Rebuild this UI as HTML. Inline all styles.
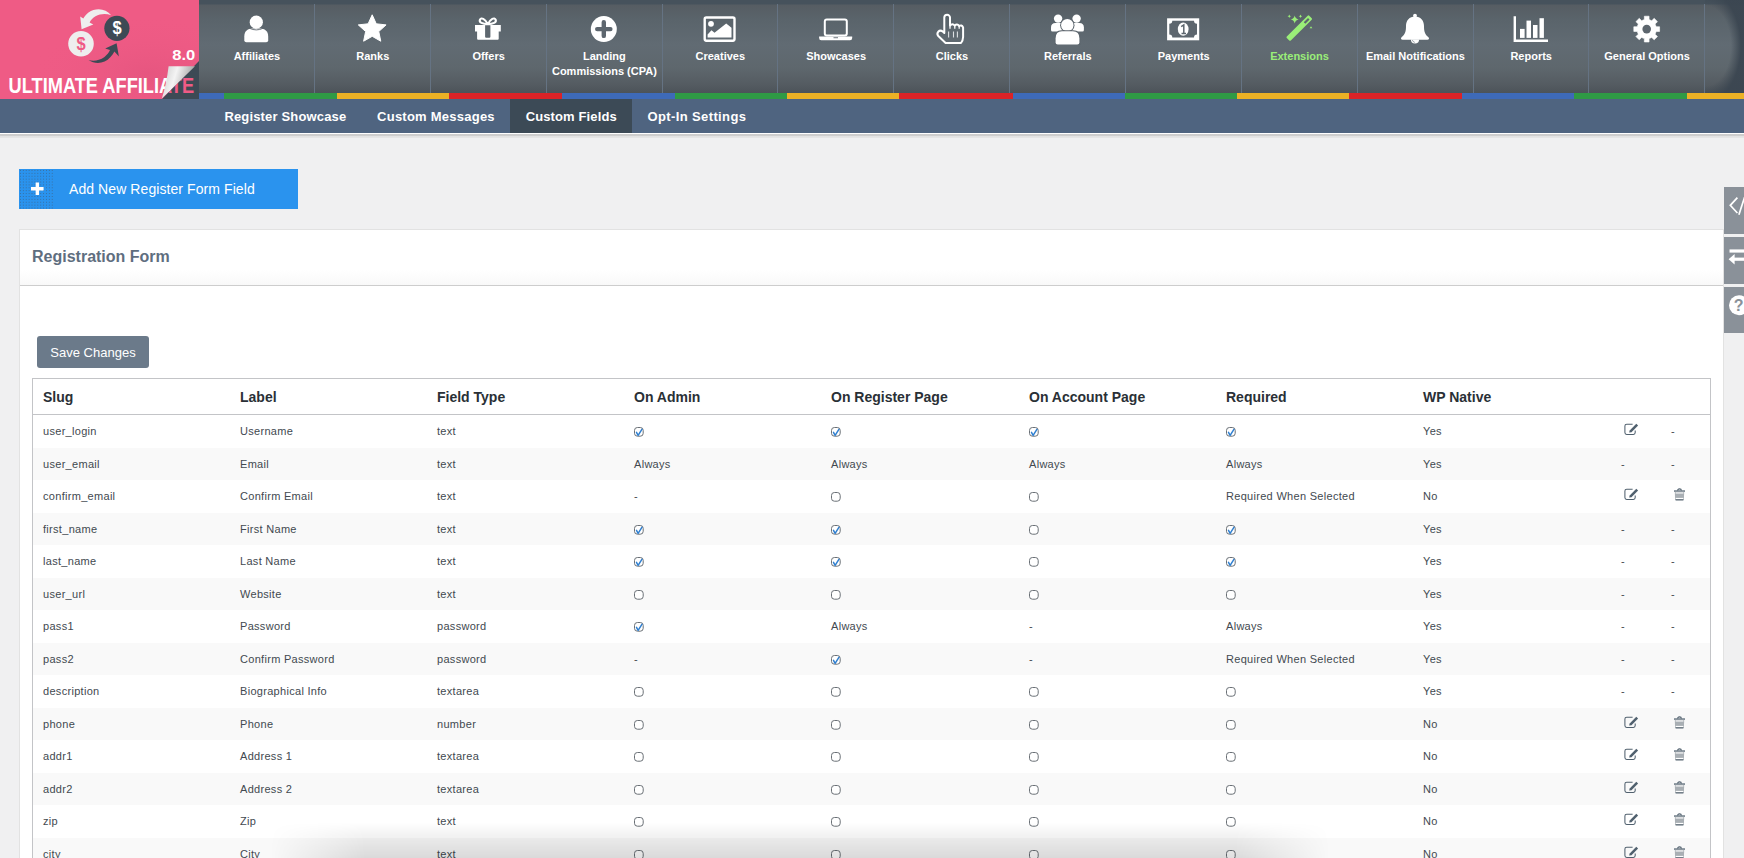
<!DOCTYPE html>
<html><head><meta charset="utf-8">
<style>
*{box-sizing:border-box;margin:0;padding:0}
html,body{width:1744px;height:858px;overflow:hidden;background:#f0f0f1;font-family:"Liberation Sans",sans-serif;position:relative}
.abs{position:absolute}
#topnav{position:absolute;left:0;top:0;width:1744px;height:93px;background:linear-gradient(#46525c 0px,#46525c 4px,#565d63 5px,#5a646b 20px,#616b73 45px,#5e676d 68px,#555c62 84px,#4c5359 93px)}
#logo{position:absolute;left:0;top:0;width:199px;height:99px;background:#ef5b85;overflow:hidden}
.nav{position:absolute;top:0;height:93px;width:115.8px;text-align:center;color:#fff;font-weight:bold;font-size:11px;line-height:15px}
.nav .lbl{position:absolute;left:0;right:0;top:49px}
.sep{position:absolute;top:4px;height:89px;width:1px;background:#657383}
#vign{position:absolute;left:1705px;top:0;width:39px;height:93px;background:radial-gradient(ellipse 36px 56px at 0px 46px,rgba(59,70,81,0) 72%,rgba(59,70,81,.95) 100%)}
#bars{position:absolute;left:199px;top:93px;width:1545px;height:6px;
 background:linear-gradient(90deg,#3e6ab8 0,#3e6ab8 25px,#2f9a45 25px,#2f9a45 138px,#ecb125 138px,#ecb125 250px,#db2327 250px,#db2327 363px,#3e6ab8 363px,#3e6ab8 476px,#2f9a45 476px,#2f9a45 588px,#ecb125 588px,#ecb125 700px,#db2327 700px,#db2327 814px,#3e6ab8 814px,#3e6ab8 926px,#2f9a45 926px,#2f9a45 1038px,#ecb125 1038px,#ecb125 1150px,#db2327 1150px,#db2327 1263px,#3e6ab8 1263px,#3e6ab8 1375px,#2f9a45 1375px,#2f9a45 1488px,#ecb125 1488px)}
#subnav{position:absolute;left:0;top:99px;width:1744px;height:33.6px;background:#4f6480}
.tab{position:absolute;top:0;height:33.6px;padding:0 15px;color:#fff;font-weight:bold;font-size:13px;line-height:34px;white-space:nowrap}
.tab.act{background:#3c4a56}
.tt{position:absolute;top:0;height:33px;color:#fff;font-weight:bold;font-size:13px;line-height:35px;white-space:nowrap}
#sline{position:absolute;left:0;top:132.6px;width:1744px;height:1.6px;background:#fff}
#sshadow{position:absolute;left:0;top:134.2px;width:1744px;height:4.5px;background:linear-gradient(#cdcdcd 0,#cfcfcf 2.2px,#e2e2e2 2.4px,#e6e6e6 4px,#f0f0f1 4.5px)}
#addbtn{position:absolute;left:19px;top:169px;width:279px;height:40px;background:#2a93ee;color:#fff;font-size:14px}
#addbtn .ic{position:absolute;left:0;top:0;width:35px;height:40px;background-color:#2a93ee;background-image:radial-gradient(circle,rgba(70,80,95,.55) 0.7px,transparent 0.9px);background-size:2.9px 2.9px}
#addbtn .t{position:absolute;left:50px;top:0;line-height:40px;letter-spacing:0.08px}
#card{position:absolute;left:19px;top:229px;width:1705px;height:700px;background:#fff;border:1px solid #e2e2e2}
#cardhead{position:absolute;left:0;top:0;width:100%;height:56px;border-bottom:1px solid #cdcdcd;background:linear-gradient(#fff 0,#fff 40px,#f8f8f8 56px)}
#cardhead h3{position:absolute;left:12px;top:18px;font-size:16px;font-weight:bold;color:#5f6e7f}
#save{position:absolute;left:37px;top:336px;width:112px;height:32px;background:#6b7a8a;border-radius:3px;color:#fff;font-size:13px;line-height:33px;text-align:center}
#tbl{position:absolute;left:32px;top:378px;width:1679px;border:1px solid #c3c4c7;border-bottom:none;background:#fff}
.row{position:relative;height:32.5px;font-size:11px;letter-spacing:0.3px;color:#424950}
.ck{position:absolute;left:0;top:10px}
.ed{position:absolute;left:3px;top:8px}
.tr{position:absolute;left:3px;top:8.3px}
.row.alt{background:#f9f9f9}
.hdr{height:36px;border-bottom:1px solid #c3c4c7;font-size:14px;font-weight:bold;color:#2a3036}
.c{position:absolute;top:0;white-space:nowrap}
.row.hdr .c{line-height:37px;letter-spacing:0}
.row .c{line-height:33px}
.cb{display:inline-block;width:10px;height:10px;border:1px solid #8c8f94;border-radius:3px;vertical-align:middle;position:relative;top:-1px;background:#fff}
#tabs{position:absolute;left:1724px;top:187px;width:20px}
.stab{position:absolute;left:0;width:20px;background:#8a9199}
#btmshadow{position:absolute;left:270px;top:822px;width:1060px;height:36px;background:linear-gradient(rgba(0,0,0,0) 0%,rgba(0,0,0,.06) 45%,rgba(0,0,0,.12) 100%);-webkit-mask-image:linear-gradient(90deg,transparent 0,#000 9%,#000 91%,transparent 100%);mask-image:linear-gradient(90deg,transparent 0,#000 9%,#000 91%,transparent 100%)}
</style></head><body>
<div id="topnav"></div>
<div id="logo"><svg class="abs" style="left:0;top:0" width="199" height="99" viewBox="0 0 199 99">
<defs>
<linearGradient id="curl" x1="0" y1="0" x2="1" y2="0.3">
<stop offset="0" stop-color="#c9c9c9"/><stop offset="0.45" stop-color="#f4f4f4"/><stop offset="1" stop-color="#9a9a9a"/>
</linearGradient>
<radialGradient id="pinkg" cx="0.75" cy="0.75" r="0.6">
<stop offset="0" stop-color="#e0527c"/><stop offset="1" stop-color="#ef5b85" stop-opacity="0"/>
</radialGradient>
</defs>
<rect width="199" height="99" fill="#ef5b85"/>
<rect width="199" height="99" fill="url(#pinkg)" opacity="0.6"/>
<!-- white arrow (top) -->
<path d="M111.2,15.2 C106,8.5 96,7.2 88.5,12.5 C86,14.3 84.5,16.5 83.3,18.4 L80.2,16.4 L81.6,29.2 L93.3,24.6 L89.6,22.4 C91,20 92.8,17.8 95.5,16.3 C100.5,13.5 106.5,13.6 111.2,15.2Z" fill="#eeeeee"/>
<!-- dark arrow (bottom) -->
<path d="M88.6,60 C95,64.5 104.5,64 110.5,57 C112,55.3 113.3,53.6 114.4,51.4 L118.9,56.6 L116.6,43.2 L105.2,48.5 L110,50.1 C108.8,52.8 107,55 104.5,57 C99,61 93,61.2 88.6,60Z" fill="#3d4a55"/>
<circle cx="81" cy="43.7" r="12.8" fill="#eeeeee"/>
<circle cx="116.9" cy="28.3" r="12.6" fill="#3d4a55"/>
<text x="0" y="0" transform="translate(81.2,49.6) scale(0.92,1)" text-anchor="middle" font-family="Liberation Sans" font-weight="bold" font-size="18" fill="#ef5b85">$</text>
<text x="0" y="0" transform="translate(117.1,34.4) scale(0.92,1)" text-anchor="middle" font-family="Liberation Sans" font-weight="bold" font-size="18" fill="#ffffff">$</text>
<text x="172.3" y="60" font-family="Liberation Sans" font-weight="bold" font-size="14.4" fill="#ffffff" textLength="23" lengthAdjust="spacingAndGlyphs">8.0</text>
<text x="8.6" y="92.6" font-family="Liberation Sans" font-weight="bold" font-size="21.6" fill="#ffffff" textLength="185.5" lengthAdjust="spacingAndGlyphs">ULTIMATE AFFILIATE</text>
<clipPath id="darktri"><path d="M199,61 L199,99 L162,99Z"/></clipPath>
<path d="M199,61 L199,99 L162,99Z" fill="#3d4a55"/>
<text clip-path="url(#darktri)" x="8.6" y="92.6" font-family="Liberation Sans" font-weight="bold" font-size="21.6" fill="#ef5b85" textLength="185.5" lengthAdjust="spacingAndGlyphs">ULTIMATE AFFILIATE</text>
<path d="M168.6,66.2 L195,66.2 L161.8,98.6 Q166.5,84 168.6,66.2Z" fill="url(#curl)"/>
</svg></div>
<div id="navitems"><div class="nav" style="left:199.0px"><div class="lbl">Affiliates</div></div>
<div class="sep" style="left:314px"></div>
<div class="nav" style="left:314.9px"><div class="lbl">Ranks</div></div>
<div class="sep" style="left:430px"></div>
<div class="nav" style="left:430.7px"><div class="lbl">Offers</div></div>
<div class="sep" style="left:546px"></div>
<div class="nav" style="left:546.5px"><div class="lbl">Landing<br>Commissions (CPA)</div></div>
<div class="sep" style="left:662px"></div>
<div class="nav" style="left:662.4px"><div class="lbl">Creatives</div></div>
<div class="sep" style="left:777px"></div>
<div class="nav" style="left:778.2px"><div class="lbl">Showcases</div></div>
<div class="sep" style="left:893px"></div>
<div class="nav" style="left:894.1px"><div class="lbl">Clicks</div></div>
<div class="sep" style="left:1009px"></div>
<div class="nav" style="left:1009.9px"><div class="lbl">Referrals</div></div>
<div class="sep" style="left:1125px"></div>
<div class="nav" style="left:1125.8px"><div class="lbl">Payments</div></div>
<div class="sep" style="left:1241px"></div>
<div class="nav" style="left:1241.6px"><div class="lbl" style="color:#9aee78">Extensions</div></div>
<div class="sep" style="left:1357px"></div>
<div class="nav" style="left:1357.5px"><div class="lbl">Email Notifications</div></div>
<div class="sep" style="left:1473px"></div>
<div class="nav" style="left:1473.3px"><div class="lbl">Reports</div></div>
<div class="sep" style="left:1588px"></div>
<div class="nav" style="left:1589.2px"><div class="lbl">General Options</div></div>
<div class="sep" style="left:1704px"></div>
<svg class="abs" style="left:0;top:0" width="1744" height="93" viewBox="0 0 1744 93">
<circle cx="256.3" cy="22.2" r="6.6" fill="#fff"/>
<path d="M244.3,40.2 L244.3,36.5 C244.3,31 248,28.6 252.5,28.6 L260,28.6 C264.5,28.6 268.2,31 268.2,36.5 L268.2,40.2 Q268.2,42.2 266.2,42.2 L246.3,42.2 Q244.3,42.2 244.3,40.2Z" fill="#fff"/>
<path d="M249.5,28.3 Q256.3,31.5 263,28.3" fill="none" stroke="#5d666e" stroke-width="0.9"/>
<path d="M372.20,14.80 L376.26,23.82 L386.09,24.89 L378.76,31.53 L380.78,41.21 L372.20,36.30 L363.62,41.21 L365.64,31.53 L358.31,24.89 L368.14,23.82Z" fill="#fff" stroke="#fff" stroke-width="1" stroke-linejoin="round"/>
<path d="M487.8,24.2 C485,18.8 481.2,17 479.9,19.8 C478.9,22.4 482.5,24 487.8,24.2Z M487.8,24.2 C490.6,18.8 494.4,17 495.7,19.8 C496.7,22.4 493.1,24 487.8,24.2Z" fill="none" stroke="#fff" stroke-width="2.1" stroke-linejoin="round"/>
<path d="M475,24.9 H500.8 V31.4 H498.7 V38.8 Q498.7,39.8 497.7,39.8 H478.1 Q477.1,39.8 477.1,38.8 V31.4 H475Z" fill="#fff"/>
<path d="M485.1,25.3 H490.4 V36.7 Q490.4,37.7 489.4,37.7 H486.1 Q485.1,37.7 485.1,36.7Z" fill="#5d666e"/>
<circle cx="603.8" cy="29.1" r="13" fill="#fff"/>
<path d="M597.2,29.1 H610.4 M603.8,22.3 V35.9" stroke="#5d666e" stroke-width="4.4" stroke-linecap="round"/>
<rect x="704.7" y="17.5" width="29.8" height="23.2" rx="1.6" fill="none" stroke="#fff" stroke-width="2.4"/>
<circle cx="711" cy="23.8" r="2.9" fill="#fff"/>
<path d="M707.6,37.6 V34.5 L711.5,30.2 L714.5,32.8 L726.2,23.4 L731.5,27.8 V37.6Z" fill="#fff"/>
<rect x="824.8" y="19.6" width="22" height="16" rx="2" fill="none" stroke="#fff" stroke-width="2"/>
<path d="M819.1,36.4 H852.2 V38 Q852.2,40.3 850,40.3 H821.3 Q819.1,40.3 819.1,38Z" fill="#fff"/>
<rect x="833.5" y="37.3" width="4.5" height="0.9" fill="#5d666e"/>
<path d="M944.3,33 V17.6 A2.85,2.85 0 0 1 950,17.6 V25.6 Q952.4,22.8 954.8,25.6 Q957,23.3 959.2,26 Q961.6,24.4 963.1,27.4 V37 Q963,40.5 961,43 H945.6 L938.3,36 Q936.5,33.8 938.2,31.8 Q940.4,29.6 942.7,31.6 Z" fill="none" stroke="#fff" stroke-width="2" stroke-linejoin="round"/>
<path d="M950,25.6 V28.8 M954.8,25.6 V28.8 M959.2,26 V28.8" stroke="#fff" stroke-width="1.3"/>
<path d="M948.6,31.4 V37.6 M953.5,31.4 V37.6 M957.4,31.4 V37.6" stroke="#dcdfe2" stroke-width="1.1"/>
<circle cx="1058.1" cy="18.6" r="4.2" fill="#fff"/><circle cx="1076.6" cy="18.6" r="4.2" fill="#fff"/>
<path d="M1051,30 V27.5 Q1051,23 1055.5,23 H1060.5 Q1063,23 1063,28 V31.6 H1052.5 Q1051,31.6 1051,30Z" fill="#fff"/>
<path d="M1083.9,30 V27.5 Q1083.9,23 1079.4,23 H1074.4 Q1071.8,23 1071.8,28 V31.6 H1082.4 Q1083.9,31.6 1083.9,30Z" fill="#fff"/>
<circle cx="1067.3" cy="25.2" r="7.2" fill="#5d666e"/>
<circle cx="1067.3" cy="25.2" r="6.2" fill="#fff"/>
<path d="M1054.6,45 V38 Q1054.6,30.2 1061.5,30.2 H1073.3 Q1080.4,30.2 1080.4,38 V45Z" fill="#5d666e"/>
<path d="M1055.6,42.5 V38.3 Q1055.6,31.2 1062,31.2 H1072.8 Q1079.4,31.2 1079.4,38.3 V42.5 Q1079.4,44.6 1077.3,44.6 H1057.7 Q1055.6,44.6 1055.6,42.5Z" fill="#fff"/>
<rect x="1167.1" y="18.3" width="32.1" height="22" fill="#fff"/>
<path d="M1172.3,20.8 H1194 A3,3 0 0 0 1197,23.8 V34.4 A3,3 0 0 0 1194,37.4 H1172.3 A3,3 0 0 0 1169.3,34.4 V23.8 A3,3 0 0 0 1172.3,20.8Z" fill="#5d666e"/>
<ellipse cx="1183.2" cy="29.1" rx="5.4" ry="6.6" fill="#fff"/>
<path d="M1181.2,26.6 L1183.8,24.9 V33.4 M1181.5,33.4 H1186" fill="none" stroke="#5d666e" stroke-width="1.5"/>
<rect x="-15.8" y="-2.85" width="31.6" height="5.7" rx="1.1" fill="#9aee78" transform="translate(1299.25,28.1) rotate(-44.7)"/>
<rect x="-3" y="-1.15" width="6" height="2.3" rx="0.3" fill="#5d666e" transform="translate(1306.7,20.9) rotate(-44.7)"/>
<path d="M1294.7,15.6 Q1295.363,18.837 1298.6000000000001,19.5 Q1295.363,20.163 1294.7,23.4 Q1294.037,20.163 1290.8,19.5 Q1294.037,18.837 1294.7,15.6Z" fill="#9aee78"/>
<path d="M1289.3,14.5 Q1289.606,15.994 1291.1,16.3 Q1289.606,16.606 1289.3,18.1 Q1288.994,16.606 1287.5,16.3 Q1288.994,15.994 1289.3,14.5Z" fill="#9aee78"/>
<path d="M1300.5,14.5 Q1300.806,15.994 1302.3,16.3 Q1300.806,16.606 1300.5,18.1 Q1300.194,16.606 1298.7,16.3 Q1300.194,15.994 1300.5,14.5Z" fill="#9aee78"/>
<path d="M1309.6,28.2 L1311,26.2 L1312.4,28.2Z" fill="#9aee78"/>
<circle cx="1415" cy="15.7" r="1.9" fill="#fff"/>
<path d="M1415,16.4 C1420.6,16.4 1424,20.4 1424,26 C1424,31.5 1424.9,34.4 1428.2,37 Q1429.4,38 1428.9,39 Q1428.5,39.7 1427.4,39.7 H1402.6 Q1401.5,39.7 1401.1,39 Q1400.6,38 1401.8,37 C1405.1,34.4 1406,31.5 1406,26 C1406,20.4 1409.4,16.4 1415,16.4Z" fill="#fff"/>
<path d="M1410.9,39.5 A4.1,4.1 0 0 0 1419.1,39.5Z" fill="#fff"/>
<path d="M1412.3,40.1 Q1413,42 1414.8,42.4" fill="none" stroke="#5d666e" stroke-width="0.6"/>
<path d="M1514.8,16.2 V40.8 H1548" fill="none" stroke="#fff" stroke-width="2.4"/>
<rect x="1520" y="28.9" width="4.6" height="9" fill="#fff"/>
<rect x="1526.5" y="20.6" width="4.5" height="17.3" fill="#fff"/>
<rect x="1533" y="25" width="4.5" height="12.9" fill="#fff"/>
<rect x="1539.5" y="18.2" width="4.4" height="19.7" fill="#fff"/>
<path d="M1656.21,26.74 L1659.59,26.75 L1659.59,31.45 L1656.21,31.46 L1655.09,34.16 L1657.47,36.56 L1654.16,39.87 L1651.76,37.49 L1649.06,38.61 L1649.05,41.99 L1644.35,41.99 L1644.34,38.61 L1641.64,37.49 L1639.24,39.87 L1635.93,36.56 L1638.31,34.16 L1637.19,31.46 L1633.81,31.45 L1633.81,26.75 L1637.19,26.74 L1638.31,24.04 L1635.93,21.64 L1639.24,18.33 L1641.64,20.71 L1644.34,19.59 L1644.35,16.21 L1649.05,16.21 L1649.06,19.59 L1651.76,20.71 L1654.16,18.33 L1657.47,21.64 L1655.09,24.04Z" fill="#fff" stroke="#fff" stroke-width="0.6" stroke-linejoin="round"/>
<circle cx="1646.7" cy="29.1" r="4.3" fill="#5d666e"/>
</svg></div>
<div id="vign"></div>
<div id="bars"></div>
<div id="subnav">
 <div class="tab act" style="left:510px;width:122px"></div>
 <div class="tt" style="left:224.4px;letter-spacing:0.16px">Register Showcase</div>
 <div class="tt" style="left:377.1px;letter-spacing:0.24px">Custom Messages</div>
 <div class="tt" style="left:525.7px;letter-spacing:0.12px">Custom Fields</div>
 <div class="tt" style="left:647.4px;letter-spacing:0.39px">Opt-In Settings</div>
</div>
<div id="sline"></div><div id="sshadow"></div>
<div id="addbtn"><div class="ic"><svg class="abs" style="left:0;top:0" width="35" height="40"><path d="M12,19.8 H24.6 M18.35,13.5 V26" stroke="#fff" stroke-width="3.4"/></svg></div><div class="t">Add New Register Form Field</div></div>
<div id="card"><div id="cardhead"><h3>Registration Form</h3></div></div>
<div id="save">Save Changes</div>
<div id="tbl"><div class="row hdr">
<div class="c" style="left:10px">Slug</div>
<div class="c" style="left:207px">Label</div>
<div class="c" style="left:404px">Field Type</div>
<div class="c" style="left:601px">On Admin</div>
<div class="c" style="left:798px">On Register Page</div>
<div class="c" style="left:996px">On Account Page</div>
<div class="c" style="left:1193px">Required</div>
<div class="c" style="left:1390px">WP Native</div>
</div>
<div class="row">
<div class="c" style="left:10px">user_login</div>
<div class="c" style="left:207px">Username</div>
<div class="c" style="left:404px">text</div>
<div class="c" style="left:601px"><svg class="ck" width="14" height="13" viewBox="0 0 14 13"><rect x="0.5" y="2.5" width="8.7" height="8.7" rx="2.9" fill="#fff" stroke="#6a7076" stroke-width="1"/><path d="M2.5 7.4 L4.1 10.3 L7.9 4.4" fill="none" stroke="#2f7fd0" stroke-width="1.5" stroke-linecap="round" stroke-linejoin="round"/></svg></div>
<div class="c" style="left:798px"><svg class="ck" width="14" height="13" viewBox="0 0 14 13"><rect x="0.5" y="2.5" width="8.7" height="8.7" rx="2.9" fill="#fff" stroke="#6a7076" stroke-width="1"/><path d="M2.5 7.4 L4.1 10.3 L7.9 4.4" fill="none" stroke="#2f7fd0" stroke-width="1.5" stroke-linecap="round" stroke-linejoin="round"/></svg></div>
<div class="c" style="left:996px"><svg class="ck" width="14" height="13" viewBox="0 0 14 13"><rect x="0.5" y="2.5" width="8.7" height="8.7" rx="2.9" fill="#fff" stroke="#6a7076" stroke-width="1"/><path d="M2.5 7.4 L4.1 10.3 L7.9 4.4" fill="none" stroke="#2f7fd0" stroke-width="1.5" stroke-linecap="round" stroke-linejoin="round"/></svg></div>
<div class="c" style="left:1193px"><svg class="ck" width="14" height="13" viewBox="0 0 14 13"><rect x="0.5" y="2.5" width="8.7" height="8.7" rx="2.9" fill="#fff" stroke="#6a7076" stroke-width="1"/><path d="M2.5 7.4 L4.1 10.3 L7.9 4.4" fill="none" stroke="#2f7fd0" stroke-width="1.5" stroke-linecap="round" stroke-linejoin="round"/></svg></div>
<div class="c" style="left:1390px">Yes</div>
<div class="c" style="left:1588px"><svg class="ed" width="16" height="14" viewBox="0 0 16 14"><path d="M8.6,1.2 H2.7 Q0.9,1.2 0.9,3 V9.6 Q0.9,11.4 2.7,11.4 H9.4 Q11.2,11.4 11.2,9.6 V7.6" fill="none" stroke="#50606e" stroke-width="1.05"/><path d="M5.1,9.6 L5.7,7.4 L12.3,0.8 L14.1,2.6 L7.5,9.2 Z" fill="#50606e"/></svg></div>
<div class="c" style="left:1638px">-</div>
</div>
<div class="row alt">
<div class="c" style="left:10px">user_email</div>
<div class="c" style="left:207px">Email</div>
<div class="c" style="left:404px">text</div>
<div class="c" style="left:601px">Always</div>
<div class="c" style="left:798px">Always</div>
<div class="c" style="left:996px">Always</div>
<div class="c" style="left:1193px">Always</div>
<div class="c" style="left:1390px">Yes</div>
<div class="c" style="left:1588px">-</div>
<div class="c" style="left:1638px">-</div>
</div>
<div class="row">
<div class="c" style="left:10px">confirm_email</div>
<div class="c" style="left:207px">Confirm Email</div>
<div class="c" style="left:404px">text</div>
<div class="c" style="left:601px">-</div>
<div class="c" style="left:798px"><svg class="ck" width="14" height="13" viewBox="0 0 14 13"><rect x="0.5" y="2.5" width="8.7" height="8.7" rx="2.9" fill="#fff" stroke="#6a7076" stroke-width="1"/></svg></div>
<div class="c" style="left:996px"><svg class="ck" width="14" height="13" viewBox="0 0 14 13"><rect x="0.5" y="2.5" width="8.7" height="8.7" rx="2.9" fill="#fff" stroke="#6a7076" stroke-width="1"/></svg></div>
<div class="c" style="left:1193px">Required When Selected</div>
<div class="c" style="left:1390px">No</div>
<div class="c" style="left:1588px"><svg class="ed" width="16" height="14" viewBox="0 0 16 14"><path d="M8.6,1.2 H2.7 Q0.9,1.2 0.9,3 V9.6 Q0.9,11.4 2.7,11.4 H9.4 Q11.2,11.4 11.2,9.6 V7.6" fill="none" stroke="#50606e" stroke-width="1.05"/><path d="M5.1,9.6 L5.7,7.4 L12.3,0.8 L14.1,2.6 L7.5,9.2 Z" fill="#50606e"/></svg></div>
<div class="c" style="left:1638px"><svg class="tr" width="12" height="14" viewBox="0 0 12 14"><path d="M3.6,2.6 Q3.6,0.9 5.5,0.9 Q7.4,0.9 7.4,2.6" fill="none" stroke="#50606e" stroke-width="1.1"/><rect x="0" y="2.4" width="11" height="1.3" fill="#50606e"/><path d="M0.8,3.7 H10.2 L9.9,11.6 Q9.8,12.3 9.1,12.3 H1.9 Q1.2,12.3 1.1,11.6 Z" fill="#a9afb4"/><rect x="1.6" y="4.4" width="7.8" height="1.1" fill="#fff"/><rect x="1.7" y="9.9" width="7.6" height="1.1" fill="#fff"/><rect x="1.6" y="11.4" width="7.8" height="1" fill="#50606e"/></svg></div>
</div>
<div class="row alt">
<div class="c" style="left:10px">first_name</div>
<div class="c" style="left:207px">First Name</div>
<div class="c" style="left:404px">text</div>
<div class="c" style="left:601px"><svg class="ck" width="14" height="13" viewBox="0 0 14 13"><rect x="0.5" y="2.5" width="8.7" height="8.7" rx="2.9" fill="#fff" stroke="#6a7076" stroke-width="1"/><path d="M2.5 7.4 L4.1 10.3 L7.9 4.4" fill="none" stroke="#2f7fd0" stroke-width="1.5" stroke-linecap="round" stroke-linejoin="round"/></svg></div>
<div class="c" style="left:798px"><svg class="ck" width="14" height="13" viewBox="0 0 14 13"><rect x="0.5" y="2.5" width="8.7" height="8.7" rx="2.9" fill="#fff" stroke="#6a7076" stroke-width="1"/><path d="M2.5 7.4 L4.1 10.3 L7.9 4.4" fill="none" stroke="#2f7fd0" stroke-width="1.5" stroke-linecap="round" stroke-linejoin="round"/></svg></div>
<div class="c" style="left:996px"><svg class="ck" width="14" height="13" viewBox="0 0 14 13"><rect x="0.5" y="2.5" width="8.7" height="8.7" rx="2.9" fill="#fff" stroke="#6a7076" stroke-width="1"/></svg></div>
<div class="c" style="left:1193px"><svg class="ck" width="14" height="13" viewBox="0 0 14 13"><rect x="0.5" y="2.5" width="8.7" height="8.7" rx="2.9" fill="#fff" stroke="#6a7076" stroke-width="1"/><path d="M2.5 7.4 L4.1 10.3 L7.9 4.4" fill="none" stroke="#2f7fd0" stroke-width="1.5" stroke-linecap="round" stroke-linejoin="round"/></svg></div>
<div class="c" style="left:1390px">Yes</div>
<div class="c" style="left:1588px">-</div>
<div class="c" style="left:1638px">-</div>
</div>
<div class="row">
<div class="c" style="left:10px">last_name</div>
<div class="c" style="left:207px">Last Name</div>
<div class="c" style="left:404px">text</div>
<div class="c" style="left:601px"><svg class="ck" width="14" height="13" viewBox="0 0 14 13"><rect x="0.5" y="2.5" width="8.7" height="8.7" rx="2.9" fill="#fff" stroke="#6a7076" stroke-width="1"/><path d="M2.5 7.4 L4.1 10.3 L7.9 4.4" fill="none" stroke="#2f7fd0" stroke-width="1.5" stroke-linecap="round" stroke-linejoin="round"/></svg></div>
<div class="c" style="left:798px"><svg class="ck" width="14" height="13" viewBox="0 0 14 13"><rect x="0.5" y="2.5" width="8.7" height="8.7" rx="2.9" fill="#fff" stroke="#6a7076" stroke-width="1"/><path d="M2.5 7.4 L4.1 10.3 L7.9 4.4" fill="none" stroke="#2f7fd0" stroke-width="1.5" stroke-linecap="round" stroke-linejoin="round"/></svg></div>
<div class="c" style="left:996px"><svg class="ck" width="14" height="13" viewBox="0 0 14 13"><rect x="0.5" y="2.5" width="8.7" height="8.7" rx="2.9" fill="#fff" stroke="#6a7076" stroke-width="1"/></svg></div>
<div class="c" style="left:1193px"><svg class="ck" width="14" height="13" viewBox="0 0 14 13"><rect x="0.5" y="2.5" width="8.7" height="8.7" rx="2.9" fill="#fff" stroke="#6a7076" stroke-width="1"/><path d="M2.5 7.4 L4.1 10.3 L7.9 4.4" fill="none" stroke="#2f7fd0" stroke-width="1.5" stroke-linecap="round" stroke-linejoin="round"/></svg></div>
<div class="c" style="left:1390px">Yes</div>
<div class="c" style="left:1588px">-</div>
<div class="c" style="left:1638px">-</div>
</div>
<div class="row alt">
<div class="c" style="left:10px">user_url</div>
<div class="c" style="left:207px">Website</div>
<div class="c" style="left:404px">text</div>
<div class="c" style="left:601px"><svg class="ck" width="14" height="13" viewBox="0 0 14 13"><rect x="0.5" y="2.5" width="8.7" height="8.7" rx="2.9" fill="#fff" stroke="#6a7076" stroke-width="1"/></svg></div>
<div class="c" style="left:798px"><svg class="ck" width="14" height="13" viewBox="0 0 14 13"><rect x="0.5" y="2.5" width="8.7" height="8.7" rx="2.9" fill="#fff" stroke="#6a7076" stroke-width="1"/></svg></div>
<div class="c" style="left:996px"><svg class="ck" width="14" height="13" viewBox="0 0 14 13"><rect x="0.5" y="2.5" width="8.7" height="8.7" rx="2.9" fill="#fff" stroke="#6a7076" stroke-width="1"/></svg></div>
<div class="c" style="left:1193px"><svg class="ck" width="14" height="13" viewBox="0 0 14 13"><rect x="0.5" y="2.5" width="8.7" height="8.7" rx="2.9" fill="#fff" stroke="#6a7076" stroke-width="1"/></svg></div>
<div class="c" style="left:1390px">Yes</div>
<div class="c" style="left:1588px">-</div>
<div class="c" style="left:1638px">-</div>
</div>
<div class="row">
<div class="c" style="left:10px">pass1</div>
<div class="c" style="left:207px">Password</div>
<div class="c" style="left:404px">password</div>
<div class="c" style="left:601px"><svg class="ck" width="14" height="13" viewBox="0 0 14 13"><rect x="0.5" y="2.5" width="8.7" height="8.7" rx="2.9" fill="#fff" stroke="#6a7076" stroke-width="1"/><path d="M2.5 7.4 L4.1 10.3 L7.9 4.4" fill="none" stroke="#2f7fd0" stroke-width="1.5" stroke-linecap="round" stroke-linejoin="round"/></svg></div>
<div class="c" style="left:798px">Always</div>
<div class="c" style="left:996px">-</div>
<div class="c" style="left:1193px">Always</div>
<div class="c" style="left:1390px">Yes</div>
<div class="c" style="left:1588px">-</div>
<div class="c" style="left:1638px">-</div>
</div>
<div class="row alt">
<div class="c" style="left:10px">pass2</div>
<div class="c" style="left:207px">Confirm Password</div>
<div class="c" style="left:404px">password</div>
<div class="c" style="left:601px">-</div>
<div class="c" style="left:798px"><svg class="ck" width="14" height="13" viewBox="0 0 14 13"><rect x="0.5" y="2.5" width="8.7" height="8.7" rx="2.9" fill="#fff" stroke="#6a7076" stroke-width="1"/><path d="M2.5 7.4 L4.1 10.3 L7.9 4.4" fill="none" stroke="#2f7fd0" stroke-width="1.5" stroke-linecap="round" stroke-linejoin="round"/></svg></div>
<div class="c" style="left:996px">-</div>
<div class="c" style="left:1193px">Required When Selected</div>
<div class="c" style="left:1390px">Yes</div>
<div class="c" style="left:1588px">-</div>
<div class="c" style="left:1638px">-</div>
</div>
<div class="row">
<div class="c" style="left:10px">description</div>
<div class="c" style="left:207px">Biographical Info</div>
<div class="c" style="left:404px">textarea</div>
<div class="c" style="left:601px"><svg class="ck" width="14" height="13" viewBox="0 0 14 13"><rect x="0.5" y="2.5" width="8.7" height="8.7" rx="2.9" fill="#fff" stroke="#6a7076" stroke-width="1"/></svg></div>
<div class="c" style="left:798px"><svg class="ck" width="14" height="13" viewBox="0 0 14 13"><rect x="0.5" y="2.5" width="8.7" height="8.7" rx="2.9" fill="#fff" stroke="#6a7076" stroke-width="1"/></svg></div>
<div class="c" style="left:996px"><svg class="ck" width="14" height="13" viewBox="0 0 14 13"><rect x="0.5" y="2.5" width="8.7" height="8.7" rx="2.9" fill="#fff" stroke="#6a7076" stroke-width="1"/></svg></div>
<div class="c" style="left:1193px"><svg class="ck" width="14" height="13" viewBox="0 0 14 13"><rect x="0.5" y="2.5" width="8.7" height="8.7" rx="2.9" fill="#fff" stroke="#6a7076" stroke-width="1"/></svg></div>
<div class="c" style="left:1390px">Yes</div>
<div class="c" style="left:1588px">-</div>
<div class="c" style="left:1638px">-</div>
</div>
<div class="row alt">
<div class="c" style="left:10px">phone</div>
<div class="c" style="left:207px">Phone</div>
<div class="c" style="left:404px">number</div>
<div class="c" style="left:601px"><svg class="ck" width="14" height="13" viewBox="0 0 14 13"><rect x="0.5" y="2.5" width="8.7" height="8.7" rx="2.9" fill="#fff" stroke="#6a7076" stroke-width="1"/></svg></div>
<div class="c" style="left:798px"><svg class="ck" width="14" height="13" viewBox="0 0 14 13"><rect x="0.5" y="2.5" width="8.7" height="8.7" rx="2.9" fill="#fff" stroke="#6a7076" stroke-width="1"/></svg></div>
<div class="c" style="left:996px"><svg class="ck" width="14" height="13" viewBox="0 0 14 13"><rect x="0.5" y="2.5" width="8.7" height="8.7" rx="2.9" fill="#fff" stroke="#6a7076" stroke-width="1"/></svg></div>
<div class="c" style="left:1193px"><svg class="ck" width="14" height="13" viewBox="0 0 14 13"><rect x="0.5" y="2.5" width="8.7" height="8.7" rx="2.9" fill="#fff" stroke="#6a7076" stroke-width="1"/></svg></div>
<div class="c" style="left:1390px">No</div>
<div class="c" style="left:1588px"><svg class="ed" width="16" height="14" viewBox="0 0 16 14"><path d="M8.6,1.2 H2.7 Q0.9,1.2 0.9,3 V9.6 Q0.9,11.4 2.7,11.4 H9.4 Q11.2,11.4 11.2,9.6 V7.6" fill="none" stroke="#50606e" stroke-width="1.05"/><path d="M5.1,9.6 L5.7,7.4 L12.3,0.8 L14.1,2.6 L7.5,9.2 Z" fill="#50606e"/></svg></div>
<div class="c" style="left:1638px"><svg class="tr" width="12" height="14" viewBox="0 0 12 14"><path d="M3.6,2.6 Q3.6,0.9 5.5,0.9 Q7.4,0.9 7.4,2.6" fill="none" stroke="#50606e" stroke-width="1.1"/><rect x="0" y="2.4" width="11" height="1.3" fill="#50606e"/><path d="M0.8,3.7 H10.2 L9.9,11.6 Q9.8,12.3 9.1,12.3 H1.9 Q1.2,12.3 1.1,11.6 Z" fill="#a9afb4"/><rect x="1.6" y="4.4" width="7.8" height="1.1" fill="#fff"/><rect x="1.7" y="9.9" width="7.6" height="1.1" fill="#fff"/><rect x="1.6" y="11.4" width="7.8" height="1" fill="#50606e"/></svg></div>
</div>
<div class="row">
<div class="c" style="left:10px">addr1</div>
<div class="c" style="left:207px">Address 1</div>
<div class="c" style="left:404px">textarea</div>
<div class="c" style="left:601px"><svg class="ck" width="14" height="13" viewBox="0 0 14 13"><rect x="0.5" y="2.5" width="8.7" height="8.7" rx="2.9" fill="#fff" stroke="#6a7076" stroke-width="1"/></svg></div>
<div class="c" style="left:798px"><svg class="ck" width="14" height="13" viewBox="0 0 14 13"><rect x="0.5" y="2.5" width="8.7" height="8.7" rx="2.9" fill="#fff" stroke="#6a7076" stroke-width="1"/></svg></div>
<div class="c" style="left:996px"><svg class="ck" width="14" height="13" viewBox="0 0 14 13"><rect x="0.5" y="2.5" width="8.7" height="8.7" rx="2.9" fill="#fff" stroke="#6a7076" stroke-width="1"/></svg></div>
<div class="c" style="left:1193px"><svg class="ck" width="14" height="13" viewBox="0 0 14 13"><rect x="0.5" y="2.5" width="8.7" height="8.7" rx="2.9" fill="#fff" stroke="#6a7076" stroke-width="1"/></svg></div>
<div class="c" style="left:1390px">No</div>
<div class="c" style="left:1588px"><svg class="ed" width="16" height="14" viewBox="0 0 16 14"><path d="M8.6,1.2 H2.7 Q0.9,1.2 0.9,3 V9.6 Q0.9,11.4 2.7,11.4 H9.4 Q11.2,11.4 11.2,9.6 V7.6" fill="none" stroke="#50606e" stroke-width="1.05"/><path d="M5.1,9.6 L5.7,7.4 L12.3,0.8 L14.1,2.6 L7.5,9.2 Z" fill="#50606e"/></svg></div>
<div class="c" style="left:1638px"><svg class="tr" width="12" height="14" viewBox="0 0 12 14"><path d="M3.6,2.6 Q3.6,0.9 5.5,0.9 Q7.4,0.9 7.4,2.6" fill="none" stroke="#50606e" stroke-width="1.1"/><rect x="0" y="2.4" width="11" height="1.3" fill="#50606e"/><path d="M0.8,3.7 H10.2 L9.9,11.6 Q9.8,12.3 9.1,12.3 H1.9 Q1.2,12.3 1.1,11.6 Z" fill="#a9afb4"/><rect x="1.6" y="4.4" width="7.8" height="1.1" fill="#fff"/><rect x="1.7" y="9.9" width="7.6" height="1.1" fill="#fff"/><rect x="1.6" y="11.4" width="7.8" height="1" fill="#50606e"/></svg></div>
</div>
<div class="row alt">
<div class="c" style="left:10px">addr2</div>
<div class="c" style="left:207px">Address 2</div>
<div class="c" style="left:404px">textarea</div>
<div class="c" style="left:601px"><svg class="ck" width="14" height="13" viewBox="0 0 14 13"><rect x="0.5" y="2.5" width="8.7" height="8.7" rx="2.9" fill="#fff" stroke="#6a7076" stroke-width="1"/></svg></div>
<div class="c" style="left:798px"><svg class="ck" width="14" height="13" viewBox="0 0 14 13"><rect x="0.5" y="2.5" width="8.7" height="8.7" rx="2.9" fill="#fff" stroke="#6a7076" stroke-width="1"/></svg></div>
<div class="c" style="left:996px"><svg class="ck" width="14" height="13" viewBox="0 0 14 13"><rect x="0.5" y="2.5" width="8.7" height="8.7" rx="2.9" fill="#fff" stroke="#6a7076" stroke-width="1"/></svg></div>
<div class="c" style="left:1193px"><svg class="ck" width="14" height="13" viewBox="0 0 14 13"><rect x="0.5" y="2.5" width="8.7" height="8.7" rx="2.9" fill="#fff" stroke="#6a7076" stroke-width="1"/></svg></div>
<div class="c" style="left:1390px">No</div>
<div class="c" style="left:1588px"><svg class="ed" width="16" height="14" viewBox="0 0 16 14"><path d="M8.6,1.2 H2.7 Q0.9,1.2 0.9,3 V9.6 Q0.9,11.4 2.7,11.4 H9.4 Q11.2,11.4 11.2,9.6 V7.6" fill="none" stroke="#50606e" stroke-width="1.05"/><path d="M5.1,9.6 L5.7,7.4 L12.3,0.8 L14.1,2.6 L7.5,9.2 Z" fill="#50606e"/></svg></div>
<div class="c" style="left:1638px"><svg class="tr" width="12" height="14" viewBox="0 0 12 14"><path d="M3.6,2.6 Q3.6,0.9 5.5,0.9 Q7.4,0.9 7.4,2.6" fill="none" stroke="#50606e" stroke-width="1.1"/><rect x="0" y="2.4" width="11" height="1.3" fill="#50606e"/><path d="M0.8,3.7 H10.2 L9.9,11.6 Q9.8,12.3 9.1,12.3 H1.9 Q1.2,12.3 1.1,11.6 Z" fill="#a9afb4"/><rect x="1.6" y="4.4" width="7.8" height="1.1" fill="#fff"/><rect x="1.7" y="9.9" width="7.6" height="1.1" fill="#fff"/><rect x="1.6" y="11.4" width="7.8" height="1" fill="#50606e"/></svg></div>
</div>
<div class="row">
<div class="c" style="left:10px">zip</div>
<div class="c" style="left:207px">Zip</div>
<div class="c" style="left:404px">text</div>
<div class="c" style="left:601px"><svg class="ck" width="14" height="13" viewBox="0 0 14 13"><rect x="0.5" y="2.5" width="8.7" height="8.7" rx="2.9" fill="#fff" stroke="#6a7076" stroke-width="1"/></svg></div>
<div class="c" style="left:798px"><svg class="ck" width="14" height="13" viewBox="0 0 14 13"><rect x="0.5" y="2.5" width="8.7" height="8.7" rx="2.9" fill="#fff" stroke="#6a7076" stroke-width="1"/></svg></div>
<div class="c" style="left:996px"><svg class="ck" width="14" height="13" viewBox="0 0 14 13"><rect x="0.5" y="2.5" width="8.7" height="8.7" rx="2.9" fill="#fff" stroke="#6a7076" stroke-width="1"/></svg></div>
<div class="c" style="left:1193px"><svg class="ck" width="14" height="13" viewBox="0 0 14 13"><rect x="0.5" y="2.5" width="8.7" height="8.7" rx="2.9" fill="#fff" stroke="#6a7076" stroke-width="1"/></svg></div>
<div class="c" style="left:1390px">No</div>
<div class="c" style="left:1588px"><svg class="ed" width="16" height="14" viewBox="0 0 16 14"><path d="M8.6,1.2 H2.7 Q0.9,1.2 0.9,3 V9.6 Q0.9,11.4 2.7,11.4 H9.4 Q11.2,11.4 11.2,9.6 V7.6" fill="none" stroke="#50606e" stroke-width="1.05"/><path d="M5.1,9.6 L5.7,7.4 L12.3,0.8 L14.1,2.6 L7.5,9.2 Z" fill="#50606e"/></svg></div>
<div class="c" style="left:1638px"><svg class="tr" width="12" height="14" viewBox="0 0 12 14"><path d="M3.6,2.6 Q3.6,0.9 5.5,0.9 Q7.4,0.9 7.4,2.6" fill="none" stroke="#50606e" stroke-width="1.1"/><rect x="0" y="2.4" width="11" height="1.3" fill="#50606e"/><path d="M0.8,3.7 H10.2 L9.9,11.6 Q9.8,12.3 9.1,12.3 H1.9 Q1.2,12.3 1.1,11.6 Z" fill="#a9afb4"/><rect x="1.6" y="4.4" width="7.8" height="1.1" fill="#fff"/><rect x="1.7" y="9.9" width="7.6" height="1.1" fill="#fff"/><rect x="1.6" y="11.4" width="7.8" height="1" fill="#50606e"/></svg></div>
</div>
<div class="row alt">
<div class="c" style="left:10px">city</div>
<div class="c" style="left:207px">City</div>
<div class="c" style="left:404px">text</div>
<div class="c" style="left:601px"><svg class="ck" width="14" height="13" viewBox="0 0 14 13"><rect x="0.5" y="2.5" width="8.7" height="8.7" rx="2.9" fill="#fff" stroke="#6a7076" stroke-width="1"/></svg></div>
<div class="c" style="left:798px"><svg class="ck" width="14" height="13" viewBox="0 0 14 13"><rect x="0.5" y="2.5" width="8.7" height="8.7" rx="2.9" fill="#fff" stroke="#6a7076" stroke-width="1"/></svg></div>
<div class="c" style="left:996px"><svg class="ck" width="14" height="13" viewBox="0 0 14 13"><rect x="0.5" y="2.5" width="8.7" height="8.7" rx="2.9" fill="#fff" stroke="#6a7076" stroke-width="1"/></svg></div>
<div class="c" style="left:1193px"><svg class="ck" width="14" height="13" viewBox="0 0 14 13"><rect x="0.5" y="2.5" width="8.7" height="8.7" rx="2.9" fill="#fff" stroke="#6a7076" stroke-width="1"/></svg></div>
<div class="c" style="left:1390px">No</div>
<div class="c" style="left:1588px"><svg class="ed" width="16" height="14" viewBox="0 0 16 14"><path d="M8.6,1.2 H2.7 Q0.9,1.2 0.9,3 V9.6 Q0.9,11.4 2.7,11.4 H9.4 Q11.2,11.4 11.2,9.6 V7.6" fill="none" stroke="#50606e" stroke-width="1.05"/><path d="M5.1,9.6 L5.7,7.4 L12.3,0.8 L14.1,2.6 L7.5,9.2 Z" fill="#50606e"/></svg></div>
<div class="c" style="left:1638px"><svg class="tr" width="12" height="14" viewBox="0 0 12 14"><path d="M3.6,2.6 Q3.6,0.9 5.5,0.9 Q7.4,0.9 7.4,2.6" fill="none" stroke="#50606e" stroke-width="1.1"/><rect x="0" y="2.4" width="11" height="1.3" fill="#50606e"/><path d="M0.8,3.7 H10.2 L9.9,11.6 Q9.8,12.3 9.1,12.3 H1.9 Q1.2,12.3 1.1,11.6 Z" fill="#a9afb4"/><rect x="1.6" y="4.4" width="7.8" height="1.1" fill="#fff"/><rect x="1.7" y="9.9" width="7.6" height="1.1" fill="#fff"/><rect x="1.6" y="11.4" width="7.8" height="1" fill="#50606e"/></svg></div>
</div></div>
<div id="tabs">
 <div class="stab" style="top:0;height:46.5px"><svg class="abs" style="left:0;top:0" width="20" height="47"><path d="M13.4,10.6 L6.3,18.3 L13.4,26" fill="none" stroke="#fff" stroke-width="1.7"/><path d="M21.2,8.2 L14.9,27.8" stroke="#fff" stroke-width="1.7"/></svg></div>
 <div class="stab" style="top:50px;height:46.5px"><svg class="abs" style="left:0;top:0" width="20" height="47"><rect x="5.5" y="12.4" width="16" height="3.2" fill="#fff"/><rect x="8" y="20.6" width="14" height="3.2" fill="#fff"/><path d="M4.6,22.2 L10.6,17 L10.6,27.4Z" fill="#fff"/></svg></div>
 <div class="stab" style="top:100px;height:46px"><svg class="abs" style="left:0;top:0" width="20" height="46"><circle cx="15" cy="18.3" r="10" fill="#fff"/><text x="14.6" y="24" text-anchor="middle" font-family="Liberation Sans" font-weight="bold" font-size="16" fill="#8a9199">?</text></svg></div>
</div>
<div id="btmshadow"></div>
</body></html>
